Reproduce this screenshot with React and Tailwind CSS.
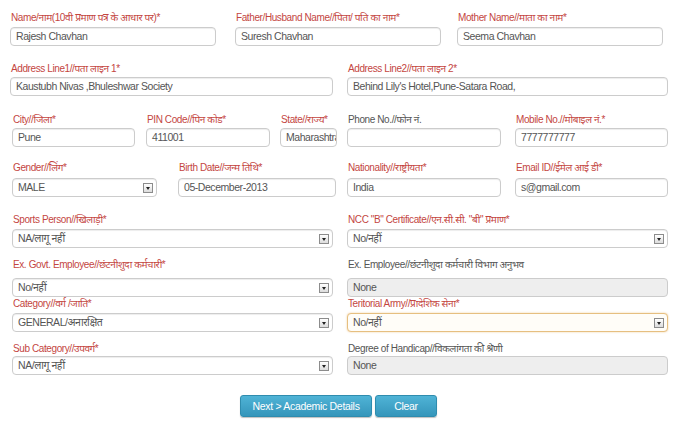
import React from "react";

const FONT = { fontFamily: '"Liberation Sans", Arial, "Noto Sans", sans-serif' };

function Label({ children, req = true }) {
  return (
    <div
      className={`h-[12px] leading-[12px] text-[10px] tracking-[-0.4px] whitespace-nowrap pl-[1px] ${
        req ? "text-[#c4463f]" : "text-[#555555]"
      }`}
    >
      {children}
    </div>
  );
}

function Box({ value, disabled, focus, select }) {
  const base =
    "h-[19px] rounded-[4px] border flex items-center justify-between pl-[5px] pr-[3px] text-[10.5px] tracking-[-0.45px] text-[#555555] overflow-hidden whitespace-nowrap";
  const look = disabled
    ? "bg-[#eeeeee] border-[#cccccc]"
    : focus
    ? "bg-[#fffdf8] border-[#e6bf80] shadow-[0_0_2px_rgba(230,170,80,0.6)]"
    : "bg-white border-[#cccccc] shadow-[inset_0_1px_1px_rgba(0,0,0,0.075)]";
  return (
    <div className={`${base} ${look}`}>
      <span className="min-w-0 pr-[2px]">{value}</span>
      {select && (
        <span className="shrink-0 w-[10px] h-[10px] border border-[#8c8c8c] bg-gradient-to-b from-white to-[#dcdcdc] flex items-end justify-center pb-[2px]">
          <span className="w-0 h-0 border-l-[2.5px] border-r-[2.5px] border-t-[3px] border-l-transparent border-r-transparent border-t-[#222222]" />
        </span>
      )}
    </div>
  );
}

function Field({ label, req, value, className, gap, disabled, focus, select }) {
  return (
    <div className={`flex flex-col ${className}`}>
      <Label req={req}>{label}</Label>
      <div className={gap} />
      <Box value={value} disabled={disabled} focus={focus} select={select} />
    </div>
  );
}

export default function App() {
  return (
    <div className="w-[682px] h-[422px] bg-white overflow-hidden" style={FONT}>
      <div className="pt-[12px]">
        {/* Row 1 */}
        <div className="flex">
          <Field className="ml-[10px] w-[206px]" gap="h-[3px]" label="Name/नाम(10वी प्रमाण पत्र के आधार पर)*" value="Rajesh Chavhan" />
          <Field className="ml-[19px] w-[206px]" gap="h-[3px]" label="Father/Husband Name//पिता/ पति का नाम*" value="Suresh Chavhan" />
          <Field className="ml-[16px] w-[206px]" gap="h-[3px]" label="Mother Name//माता का नाम*" value="Seema Chavhan" />
        </div>
        {/* Row 2 */}
        <div className="flex mt-[17px]">
          <Field className="ml-[10px] w-[323px]" gap="h-[2px]" label="Address Line1//पता लाइन 1*" value="Kaustubh Nivas ,Bhuleshwar Society" />
          <Field className="ml-[14px] w-[321px]" gap="h-[2px]" label="Address Line2//पता लाइन 2*" value="Behind Lily's Hotel,Pune-Satara Road," />
        </div>
        {/* Row 3 */}
        <div className="flex mt-[18px]">
          <Field className="ml-[12px] w-[123px]" gap="h-[2px]" label="City//जिला*" value="Pune" />
          <Field className="ml-[11px] w-[124px]" gap="h-[2px]" label="PIN Code//पिन कोड*" value="411001" />
          <Field className="ml-[10px] w-[57px]" gap="h-[2px]" label="State//राज्य*" value="Maharashtra" />
          <Field className="ml-[10px] w-[154px]" gap="h-[2px]" req={false} label="Phone No.//फोन नं." value="" />
          <Field className="ml-[14px] w-[153px]" gap="h-[2px]" label="Mobile No.//मोबाइल नं.*" value="7777777777" />
        </div>
        {/* Row 4 */}
        <div className="flex mt-[15px]">
          <Field className="ml-[12px] w-[145px]" gap="h-[4px]" label="Gender//लिंग*" value="MALE" select />
          <Field className="ml-[21px] w-[158px]" gap="h-[4px]" label="Birth Date//जन्म तिथि*" value="05-December-2013" />
          <Field className="ml-[11px] w-[154px]" gap="h-[4px]" label="Nationality//राष्ट्रीयता*" value="India" />
          <Field className="ml-[14px] w-[153px]" gap="h-[4px]" label="Email ID//ईमेल आई डी*" value="s@gmail.com" />
        </div>
        {/* Row 5 */}
        <div className="flex mt-[17px]">
          <Field className="ml-[12px] w-[321px]" gap="h-[3px]" label="Sports Person//खिलाड़ी*" value="NA/लागू नहीं" select />
          <Field className="ml-[14px] w-[321px]" gap="h-[3px]" label={'NCC "B" Certificate//एन.सी.सी. "बी" प्रमाण*'} value="No/नहीं" select />
        </div>
        {/* Row 6 */}
        <div className="flex mt-[11px]">
          <Field className="ml-[12px] w-[321px]" gap="h-[7px]" label="Ex. Govt. Employee//छंटनीशुदा कर्मचारी*" value="No/नहीं" select />
          <Field className="ml-[14px] w-[321px]" gap="h-[7px]" req={false} label="Ex. Employee//छंटनीशुदा कर्मचारी विभाग अनुभव" value="None" disabled />
        </div>
        {/* Row 7 */}
        <div className="flex mt-[1px]">
          <Field className="ml-[12px] w-[321px]" gap="h-[3px]" label="Category//वर्ग /जाति*" value="GENERAL/अनारक्षित" select />
          <Field className="ml-[14px] w-[321px]" gap="h-[3px]" label="Teritorial Army//प्रादेशिक सेना*" value="No/नहीं" select focus />
        </div>
        {/* Row 8 */}
        <div className="flex mt-[11px]">
          <Field className="ml-[12px] w-[321px]" gap="h-[1px]" label="Sub Category//उपवर्ग*" value="NA/लागू नहीं" select />
          <Field className="ml-[14px] w-[321px]" gap="h-[1px]" req={false} label="Degree of Handicap//विकलांगता की श्रेणी" value="None" disabled />
        </div>
        {/* Buttons */}
        <div className="flex justify-center gap-[3px] mt-[20px] pr-[5px]">
          <button className="w-[132px] h-[22px] rounded-[3px] border border-[#2f8cae] bg-gradient-to-b from-[#4fb3d6] to-[#3596bb] shadow-[0_1px_1px_rgba(0,0,0,0.25)] text-white text-[10.5px] tracking-[-0.3px] leading-[20px]">
            Next &gt; Academic Details
          </button>
          <button className="w-[62px] h-[22px] rounded-[3px] border border-[#2f8cae] bg-gradient-to-b from-[#4fb3d6] to-[#3596bb] shadow-[0_1px_1px_rgba(0,0,0,0.25)] text-white text-[10.5px] tracking-[-0.3px] leading-[20px]">
            Clear
          </button>
        </div>
      </div>
    </div>
  );
}
